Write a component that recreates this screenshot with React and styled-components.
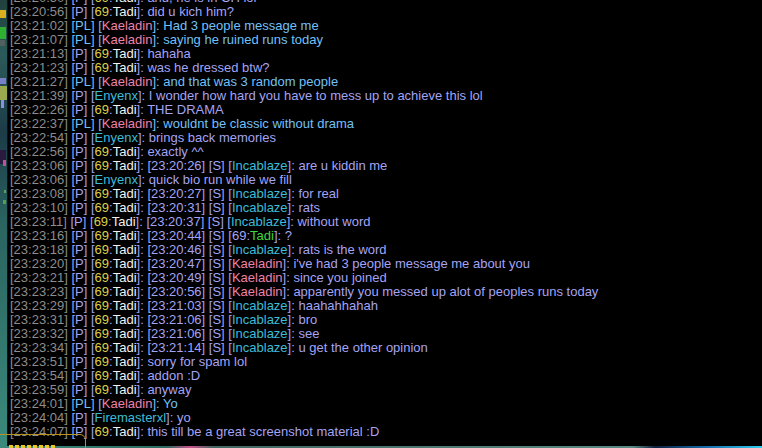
import React from "react";
import styled, { createGlobalStyle } from "styled-components";

const GlobalStyle = createGlobalStyle`
  * {
    box-sizing: border-box;
  }

  html, body, #root {
    margin: 0;
    padding: 0;
    background: #000;
  }

  body {
    width: 762px;
    height: 448px;
    overflow: hidden;
  }
`;

// chat colours, roughly the wow defaults dimmed a bit by the screenshot
const colors = {
  time: "#8d8d8d",
  party: "#a4a4f4",
  leader: "#72c0f8",
  pal: "#ee82aa",
  lvl: "#dcd046",
  priest: "#f2f2f2",
  mage: "#3cbcd8",
  hunter: "#40d840",
};

const Screen = styled.div`
  position: relative;
  width: 762px;
  height: 448px;
  display: flex;
  flex-direction: column;
  background: #000;
  overflow: hidden;
`;

const Main = styled.div`
  display: flex;
  flex: 1;
  min-height: 0;
`;

const SceneEdge = styled.svg`
  flex: 0 0 7px;
  height: 100%;
  display: block;
`;

const ChatFrame = styled.div`
  flex: 1;
  display: flex;
  flex-direction: column;
  justify-content: flex-end;
  overflow: hidden;
  padding: 0 0 7px 2px;
  background: #000;
  border-left: 1px solid #0c1414;
`;

const Line = styled.div`
  height: 14px;
  line-height: 14px;
  white-space: pre;
  font-family: "Liberation Sans", Arial, sans-serif;
  font-size: 13px;
`;

const Seg = styled.span`
  color: ${(p) => colors[p.$c]};
`;

const BottomStrip = styled.svg`
  flex: 0 0 2px;
  width: 762px;
  display: block;
`;

const EditBox = styled.div`
  position: absolute;
  left: -4px;
  top: 434px;
  width: 90px;
  height: 30px;
  border: 1px solid #b89220;
  border-top-right-radius: 6px;
  background: transparent;
`;

const EditDots = styled.div`
  position: absolute;
  left: 9px;
  top: 445px;
  width: 46px;
  height: 3px;
  background: repeating-linear-gradient(
    90deg,
    #e8c828 0 4px,
    transparent 4px 6px
  );
`;

// a line is a list of [text, colour] pieces
const T = (t) => [`[${t}]`, "time"];

const tadi = (tone) => [
  [" [", tone],
  ["69", "lvl"],
  [":", tone],
  ["Tadi", "priest"],
  ["]: ", tone],
];
const name = (n, c, tone) => [
  [" [", tone],
  [n, c],
  ["]: ", tone],
];
const P = [[" [P]", "party"]];
const PL = [[" [PL]", "leader"]];

const quote = (time, n, c) => [
  [`[${time}] [S] [`, "party"],
  ...(n === "Tadi"
    ? [
        ["69:", "party"],
        ["Tadi", "hunter"],
      ]
    : [[n, c]]),
  ["]: ", "party"],
];

const partyTadi = (time, ...rest) => [T(time), ...P, ...tadi("party"), ...rest];
const kael = (time, msg) => [
  T(time),
  ...PL,
  ...name("Kaeladin", "pal", "leader"),
  [msg, "leader"],
];
const inc = (time, q, msg) =>
  partyTadi(time, ...quote(q, "Incablaze", "mage"), [msg, "party"]);
const kq = (time, q, msg) =>
  partyTadi(time, ...quote(q, "Kaeladin", "pal"), [msg, "party"]);

const lines = [
  partyTadi("23:20:50", ["and, he is in CH lol", "party"]),
  partyTadi("23:20:56", ["did u kich him?", "party"]),
  kael("23:21:02", "Had 3 people message me"),
  kael("23:21:07", "saying he ruined runs today"),
  partyTadi("23:21:13", ["hahaha", "party"]),
  partyTadi("23:21:23", ["was he dressed btw?", "party"]),
  kael("23:21:27", "and that was 3 random people"),
  [T("23:21:39"), ...P, ...name("Enyenx", "mage", "party"), ["I wonder how hard you have to mess up to achieve this lol", "party"]],
  partyTadi("23:22:26", ["THE DRAMA", "party"]),
  kael("23:22:37", "wouldnt be classic without drama"),
  [T("23:22:54"), ...P, ...name("Enyenx", "mage", "party"), ["brings back memories", "party"]],
  partyTadi("23:22:56", ["exactly ^^", "party"]),
  inc("23:23:06", "23:20:26", "are u kiddin me"),
  [T("23:23:06"), ...P, ...name("Enyenx", "mage", "party"), ["quick bio run while we fill", "party"]],
  inc("23:23:08", "23:20:27", "for real"),
  inc("23:23:10", "23:20:31", "rats"),
  inc("23:23:11", "23:20:37", "without word"),
  partyTadi("23:23:16", ...quote("23:20:44", "Tadi"), ["?", "party"]),
  inc("23:23:18", "23:20:46", "rats is the word"),
  kq("23:23:20", "23:20:47", "i've had 3 people message me about you"),
  kq("23:23:21", "23:20:49", "since you joined"),
  kq("23:23:23", "23:20:56", "apparently you messed up alot of peoples runs today"),
  inc("23:23:29", "23:21:03", "haahahhahah"),
  inc("23:23:31", "23:21:06", "bro"),
  inc("23:23:32", "23:21:06", "see"),
  inc("23:23:34", "23:21:14", "u get the other opinion"),
  partyTadi("23:23:51", ["sorry for spam lol", "party"]),
  partyTadi("23:23:54", ["addon :D", "party"]),
  partyTadi("23:23:59", ["anyway", "party"]),
  kael("23:24:01", "Yo"),
  [T("23:24:04"), ...P, ...name("Firemasterxl", "mage", "party"), ["yo", "party"]],
  partyTadi("23:24:07", ["this till be a great screenshot material :D", "party"]),
];

const EdgeArt = () => (
  <SceneEdge viewBox="0 0 7 446" preserveAspectRatio="none">
    <defs>
      <linearGradient id="edge" x1="0" y1="0" x2="0" y2="1">
        <stop offset="0" stopColor="#20403c" />
        <stop offset="0.12" stopColor="#2c5a5a" />
        <stop offset="0.3" stopColor="#1c3c48" />
        <stop offset="0.5" stopColor="#2a6460" />
        <stop offset="0.8" stopColor="#347a70" />
        <stop offset="1" stopColor="#3a8a7c" />
      </linearGradient>
    </defs>
    <rect width="7" height="446" fill="url(#edge)" />
    <rect x="0" y="10" width="6" height="8" fill="#d8b020" />
    <rect x="0" y="27" width="6" height="12" fill="#30b030" />
    <rect x="0" y="40" width="5" height="6" fill="#506060" />
    <rect x="0" y="78" width="6" height="6" fill="#7a80c8" />
    <rect x="0" y="86" width="7" height="14" fill="#b8c050" opacity="0.8" />
    <rect x="1" y="100" width="3" height="8" fill="#8a90e0" />
    <rect x="0" y="150" width="6" height="14" fill="#2a1a40" />
    <rect x="3" y="160" width="3" height="6" fill="#c050a0" />
    <rect x="4" y="190" width="2" height="3" fill="#60a060" />
    <rect x="3" y="200" width="3" height="4" fill="#50a050" />
  </SceneEdge>
);

const BottomArt = () => (
  <BottomStrip viewBox="0 0 762 2" preserveAspectRatio="none">
    <defs>
      <linearGradient id="floor" x1="0" y1="0" x2="1" y2="0">
        <stop offset="0" stopColor="#3a8a7c" />
        <stop offset="0.22" stopColor="#2e6a62" />
        <stop offset="0.25" stopColor="#c8508a" />
        <stop offset="0.28" stopColor="#406860" />
        <stop offset="0.83" stopColor="#5a8a84" />
        <stop offset="0.86" stopColor="#0c2040" />
        <stop offset="0.93" stopColor="#1870b0" />
        <stop offset="1" stopColor="#30d0f0" />
      </linearGradient>
    </defs>
    <rect width="762" height="2" fill="url(#floor)" />
  </BottomStrip>
);

export default function App() {
  return (
    <Screen>
      <GlobalStyle />
      <Main>
        <EdgeArt />
        <ChatFrame>
          {lines.map((segs, i) => (
            <Line key={i}>
              {segs.map(([text, c], j) => (
                <Seg key={j} $c={c}>
                  {text}
                </Seg>
              ))}
            </Line>
          ))}
        </ChatFrame>
      </Main>
      <BottomArt />
      <EditBox />
      <EditDots />
    </Screen>
  );
}
